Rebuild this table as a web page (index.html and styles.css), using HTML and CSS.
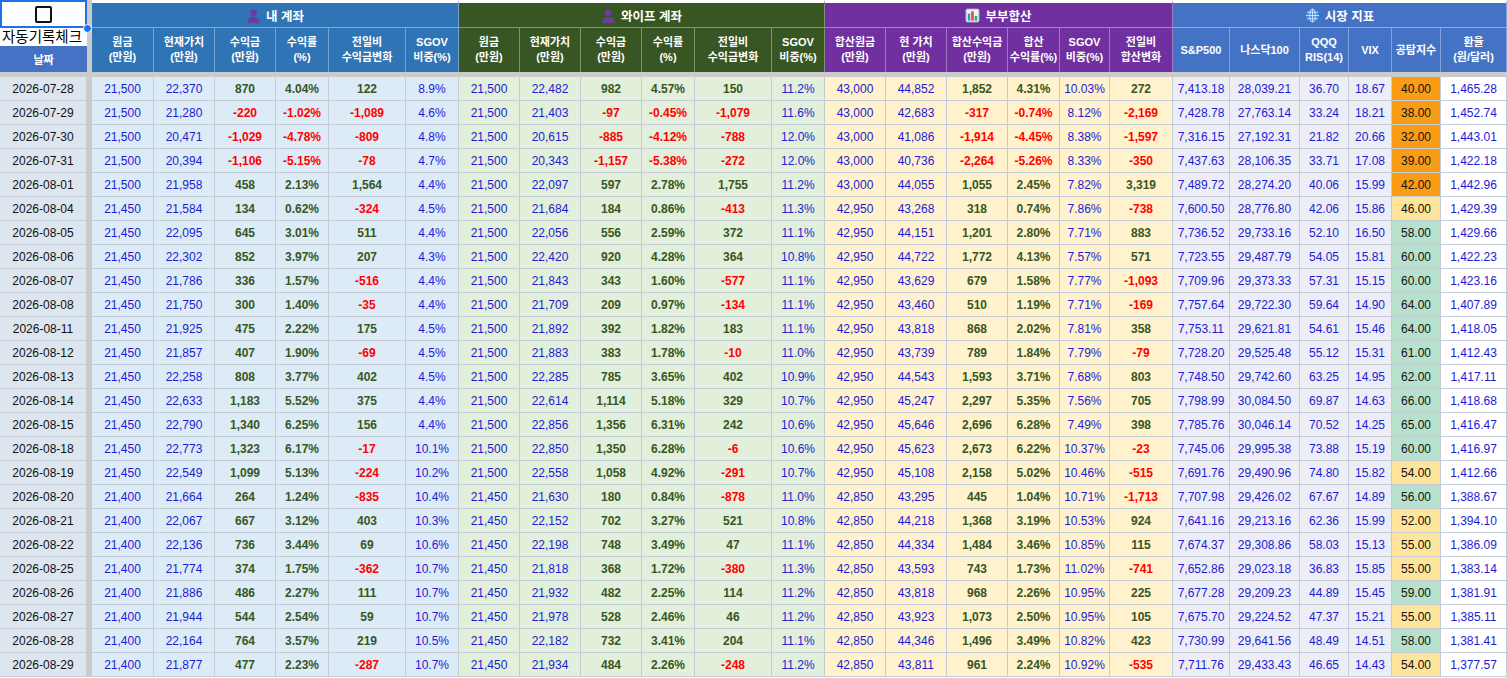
FILE: index.html
```html
<!DOCTYPE html>
<html lang="ko">
<head>
<meta charset="utf-8">
<title>계좌 기록</title>
<link rel="stylesheet" href="styles.css">
</head>
<body>
<div class="sheet">
  <div class="sep-col"></div>
  <div class="sep-row"></div>

  <div class="dtop"><div class="chk"></div><div class="handle"></div></div>
  <div class="g b1"><svg class="ico" width="15" height="15" viewBox="0 0 16 16"><circle cx="8" cy="5" r="3.6" fill="#6b3c9e"/><path d="M1.5 16c0-4.2 2.9-6.6 6.5-6.6s6.5 2.4 6.5 6.6z" fill="#6b3c9e"/></svg><span>내 계좌</span></div>
  <div class="g b2"><svg class="ico" width="15" height="15" viewBox="0 0 16 16"><circle cx="8" cy="5" r="3.6" fill="#6b3c9e"/><path d="M1.5 16c0-4.2 2.9-6.6 6.5-6.6s6.5 2.4 6.5 6.6z" fill="#6b3c9e"/></svg><span>와이프 계좌</span></div>
  <div class="g b3"><svg class="ico" width="15" height="15" viewBox="0 0 16 16"><rect x="1" y="1" width="14" height="14" rx="1.5" fill="#f2f2f2" stroke="#9aa3ab"/><rect x="3" y="6" width="2.6" height="7.5" fill="#3b8fd6"/><rect x="6.7" y="3.5" width="2.6" height="10" fill="#e0443c"/><rect x="10.4" y="8.5" width="2.6" height="5" fill="#35a57a"/></svg><span>부부합산</span></div>
  <div class="g b4"><svg class="ico" width="15" height="15" viewBox="0 0 16 16"><circle cx="8" cy="8" r="7" fill="#3d8de0"/><g fill="none" stroke="#d4e9ff" stroke-width="0.9"><ellipse cx="8" cy="8" rx="3" ry="7"/><line x1="8" y1="1" x2="8" y2="15"/><line x1="1" y1="8" x2="15" y2="8"/><path d="M2.2 4.6h11.6M2.2 11.4h11.6"/></g></svg><span>시장 지표</span></div>

  <div class="dhead"><div class="auto">자동기록체크</div><div class="dlabel">날짜</div></div>
  <div class="h b1">원금<br>(만원)</div>
  <div class="h b1">현재가치<br>(만원)</div>
  <div class="h b1">수익금<br>(만원)</div>
  <div class="h b1">수익률<br>(%)</div>
  <div class="h b1">전일비<br>수익금변화</div>
  <div class="h b1">SGOV<br>비중(%)</div>
  <div class="h b2">원금<br>(만원)</div>
  <div class="h b2">현재가치<br>(만원)</div>
  <div class="h b2">수익금<br>(만원)</div>
  <div class="h b2">수익률<br>(%)</div>
  <div class="h b2">전일비<br>수익금변화</div>
  <div class="h b2">SGOV<br>비중(%)</div>
  <div class="h b3">합산원금<br>(만원)</div>
  <div class="h b3">현 가치<br>(만원)</div>
  <div class="h b3">합산수익금<br>(만원)</div>
  <div class="h b3">합산<br>수익률(%)</div>
  <div class="h b3">SGOV<br>비중(%)</div>
  <div class="h b3">전일비<br>합산변화</div>
  <div class="h b4">S&amp;P500</div>
  <div class="h b4">나스닥100</div>
  <div class="h b4">QQQ<br>RIS(14)</div>
  <div class="h b4">VIX</div>
  <div class="h b4">공탐지수</div>
  <div class="h b4">환율<br>(원/달러)</div>

  <div class="r"><span>2026-07-28</span><span>21,500</span><span>22,370</span><span>870</span><span>4.04%</span><span>122</span><span>8.9%</span><span>21,500</span><span>22,482</span><span>982</span><span>4.57%</span><span>150</span><span>11.2%</span><span>43,000</span><span>44,852</span><span>1,852</span><span>4.31%</span><span>10.03%</span><span>272</span><span>7,413.18</span><span>28,039.21</span><span>36.70</span><span>18.67</span><span class="o">40.00</span><span>1,465.28</span></div>
  <div class="r"><span>2026-07-29</span><span>21,500</span><span>21,280</span><span class="n">-220</span><span class="n">-1.02%</span><span class="n">-1,089</span><span>4.6%</span><span>21,500</span><span>21,403</span><span class="n">-97</span><span class="n">-0.45%</span><span class="n">-1,079</span><span>11.6%</span><span>43,000</span><span>42,683</span><span class="n">-317</span><span class="n">-0.74%</span><span>8.12%</span><span class="n">-2,169</span><span>7,428.78</span><span>27,763.14</span><span>33.24</span><span>18.21</span><span class="o">38.00</span><span>1,452.74</span></div>
  <div class="r"><span>2026-07-30</span><span>21,500</span><span>20,471</span><span class="n">-1,029</span><span class="n">-4.78%</span><span class="n">-809</span><span>4.8%</span><span>21,500</span><span>20,615</span><span class="n">-885</span><span class="n">-4.12%</span><span class="n">-788</span><span>12.0%</span><span>43,000</span><span>41,086</span><span class="n">-1,914</span><span class="n">-4.45%</span><span>8.38%</span><span class="n">-1,597</span><span>7,316.15</span><span>27,192.31</span><span>21.82</span><span>20.66</span><span class="o">32.00</span><span>1,443.01</span></div>
  <div class="r"><span>2026-07-31</span><span>21,500</span><span>20,394</span><span class="n">-1,106</span><span class="n">-5.15%</span><span class="n">-78</span><span>4.7%</span><span>21,500</span><span>20,343</span><span class="n">-1,157</span><span class="n">-5.38%</span><span class="n">-272</span><span>12.0%</span><span>43,000</span><span>40,736</span><span class="n">-2,264</span><span class="n">-5.26%</span><span>8.33%</span><span class="n">-350</span><span>7,437.63</span><span>28,106.35</span><span>33.71</span><span>17.08</span><span class="o">39.00</span><span>1,422.18</span></div>
  <div class="r"><span>2026-08-01</span><span>21,500</span><span>21,958</span><span>458</span><span>2.13%</span><span>1,564</span><span>4.4%</span><span>21,500</span><span>22,097</span><span>597</span><span>2.78%</span><span>1,755</span><span>11.2%</span><span>43,000</span><span>44,055</span><span>1,055</span><span>2.45%</span><span>7.82%</span><span>3,319</span><span>7,489.72</span><span>28,274.20</span><span>40.06</span><span>15.99</span><span class="o">42.00</span><span>1,442.96</span></div>
  <div class="r"><span>2026-08-04</span><span>21,450</span><span>21,584</span><span>134</span><span>0.62%</span><span class="n">-324</span><span>4.5%</span><span>21,500</span><span>21,684</span><span>184</span><span>0.86%</span><span class="n">-413</span><span>11.3%</span><span>42,950</span><span>43,268</span><span>318</span><span>0.74%</span><span>7.86%</span><span class="n">-738</span><span>7,600.50</span><span>28,776.80</span><span>42.06</span><span>15.86</span><span class="y">46.00</span><span>1,429.39</span></div>
  <div class="r"><span>2026-08-05</span><span>21,450</span><span>22,095</span><span>645</span><span>3.01%</span><span>511</span><span>4.4%</span><span>21,500</span><span>22,056</span><span>556</span><span>2.59%</span><span>372</span><span>11.1%</span><span>42,950</span><span>44,151</span><span>1,201</span><span>2.80%</span><span>7.71%</span><span>883</span><span>7,736.52</span><span>29,733.16</span><span>52.10</span><span>16.50</span><span class="gr">58.00</span><span>1,429.66</span></div>
  <div class="r"><span>2026-08-06</span><span>21,450</span><span>22,302</span><span>852</span><span>3.97%</span><span>207</span><span>4.3%</span><span>21,500</span><span>22,420</span><span>920</span><span>4.28%</span><span>364</span><span>10.8%</span><span>42,950</span><span>44,722</span><span>1,772</span><span>4.13%</span><span>7.57%</span><span>571</span><span>7,723.55</span><span>29,487.79</span><span>54.05</span><span>15.81</span><span class="gr">60.00</span><span>1,422.23</span></div>
  <div class="r"><span>2026-08-07</span><span>21,450</span><span>21,786</span><span>336</span><span>1.57%</span><span class="n">-516</span><span>4.4%</span><span>21,500</span><span>21,843</span><span>343</span><span>1.60%</span><span class="n">-577</span><span>11.1%</span><span>42,950</span><span>43,629</span><span>679</span><span>1.58%</span><span>7.77%</span><span class="n">-1,093</span><span>7,709.96</span><span>29,373.33</span><span>57.31</span><span>15.15</span><span class="gr">60.00</span><span>1,423.16</span></div>
  <div class="r"><span>2026-08-08</span><span>21,450</span><span>21,750</span><span>300</span><span>1.40%</span><span class="n">-35</span><span>4.4%</span><span>21,500</span><span>21,709</span><span>209</span><span>0.97%</span><span class="n">-134</span><span>11.1%</span><span>42,950</span><span>43,460</span><span>510</span><span>1.19%</span><span>7.71%</span><span class="n">-169</span><span>7,757.64</span><span>29,722.30</span><span>59.64</span><span>14.90</span><span class="gr">64.00</span><span>1,407.89</span></div>
  <div class="r"><span>2026-08-11</span><span>21,450</span><span>21,925</span><span>475</span><span>2.22%</span><span>175</span><span>4.5%</span><span>21,500</span><span>21,892</span><span>392</span><span>1.82%</span><span>183</span><span>11.1%</span><span>42,950</span><span>43,818</span><span>868</span><span>2.02%</span><span>7.81%</span><span>358</span><span>7,753.11</span><span>29,621.81</span><span>54.61</span><span>15.46</span><span class="gr">64.00</span><span>1,418.05</span></div>
  <div class="r"><span>2026-08-12</span><span>21,450</span><span>21,857</span><span>407</span><span>1.90%</span><span class="n">-69</span><span>4.5%</span><span>21,500</span><span>21,883</span><span>383</span><span>1.78%</span><span class="n">-10</span><span>11.0%</span><span>42,950</span><span>43,739</span><span>789</span><span>1.84%</span><span>7.79%</span><span class="n">-79</span><span>7,728.20</span><span>29,525.48</span><span>55.12</span><span>15.31</span><span class="gr">61.00</span><span>1,412.43</span></div>
  <div class="r"><span>2026-08-13</span><span>21,450</span><span>22,258</span><span>808</span><span>3.77%</span><span>402</span><span>4.5%</span><span>21,500</span><span>22,285</span><span>785</span><span>3.65%</span><span>402</span><span>10.9%</span><span>42,950</span><span>44,543</span><span>1,593</span><span>3.71%</span><span>7.68%</span><span>803</span><span>7,748.50</span><span>29,742.60</span><span>63.25</span><span>14.95</span><span class="gr">62.00</span><span>1,417.11</span></div>
  <div class="r"><span>2026-08-14</span><span>21,450</span><span>22,633</span><span>1,183</span><span>5.52%</span><span>375</span><span>4.4%</span><span>21,500</span><span>22,614</span><span>1,114</span><span>5.18%</span><span>329</span><span>10.7%</span><span>42,950</span><span>45,247</span><span>2,297</span><span>5.35%</span><span>7.56%</span><span>705</span><span>7,798.99</span><span>30,084.50</span><span>69.87</span><span>14.63</span><span class="gr">66.00</span><span>1,418.68</span></div>
  <div class="r"><span>2026-08-15</span><span>21,450</span><span>22,790</span><span>1,340</span><span>6.25%</span><span>156</span><span>4.4%</span><span>21,500</span><span>22,856</span><span>1,356</span><span>6.31%</span><span>242</span><span>10.6%</span><span>42,950</span><span>45,646</span><span>2,696</span><span>6.28%</span><span>7.49%</span><span>398</span><span>7,785.76</span><span>30,046.14</span><span>70.52</span><span>14.25</span><span class="gr">65.00</span><span>1,416.47</span></div>
  <div class="r"><span>2026-08-18</span><span>21,450</span><span>22,773</span><span>1,323</span><span>6.17%</span><span class="n">-17</span><span>10.1%</span><span>21,500</span><span>22,850</span><span>1,350</span><span>6.28%</span><span class="n">-6</span><span>10.6%</span><span>42,950</span><span>45,623</span><span>2,673</span><span>6.22%</span><span>10.37%</span><span class="n">-23</span><span>7,745.06</span><span>29,995.38</span><span>73.88</span><span>15.19</span><span class="gr">60.00</span><span>1,416.97</span></div>
  <div class="r"><span>2026-08-19</span><span>21,450</span><span>22,549</span><span>1,099</span><span>5.13%</span><span class="n">-224</span><span>10.2%</span><span>21,500</span><span>22,558</span><span>1,058</span><span>4.92%</span><span class="n">-291</span><span>10.7%</span><span>42,950</span><span>45,108</span><span>2,158</span><span>5.02%</span><span>10.46%</span><span class="n">-515</span><span>7,691.76</span><span>29,490.96</span><span>74.80</span><span>15.82</span><span class="y">54.00</span><span>1,412.66</span></div>
  <div class="r"><span>2026-08-20</span><span>21,400</span><span>21,664</span><span>264</span><span>1.24%</span><span class="n">-835</span><span>10.4%</span><span>21,450</span><span>21,630</span><span>180</span><span>0.84%</span><span class="n">-878</span><span>11.0%</span><span>42,850</span><span>43,295</span><span>445</span><span>1.04%</span><span>10.71%</span><span class="n">-1,713</span><span>7,707.98</span><span>29,426.02</span><span>67.67</span><span>14.89</span><span class="gr">56.00</span><span>1,388.67</span></div>
  <div class="r"><span>2026-08-21</span><span>21,400</span><span>22,067</span><span>667</span><span>3.12%</span><span>403</span><span>10.3%</span><span>21,450</span><span>22,152</span><span>702</span><span>3.27%</span><span>521</span><span>10.8%</span><span>42,850</span><span>44,218</span><span>1,368</span><span>3.19%</span><span>10.53%</span><span>924</span><span>7,641.16</span><span>29,213.16</span><span>62.36</span><span>15.99</span><span class="y">52.00</span><span>1,394.10</span></div>
  <div class="r"><span>2026-08-22</span><span>21,400</span><span>22,136</span><span>736</span><span>3.44%</span><span>69</span><span>10.6%</span><span>21,450</span><span>22,198</span><span>748</span><span>3.49%</span><span>47</span><span>11.1%</span><span>42,850</span><span>44,334</span><span>1,484</span><span>3.46%</span><span>10.85%</span><span>115</span><span>7,674.37</span><span>29,308.86</span><span>58.03</span><span>15.13</span><span class="y">55.00</span><span>1,386.09</span></div>
  <div class="r"><span>2026-08-25</span><span>21,400</span><span>21,774</span><span>374</span><span>1.75%</span><span class="n">-362</span><span>10.7%</span><span>21,450</span><span>21,818</span><span>368</span><span>1.72%</span><span class="n">-380</span><span>11.3%</span><span>42,850</span><span>43,593</span><span>743</span><span>1.73%</span><span>11.02%</span><span class="n">-741</span><span>7,652.86</span><span>29,023.18</span><span>36.83</span><span>15.85</span><span class="y">55.00</span><span>1,383.14</span></div>
  <div class="r"><span>2026-08-26</span><span>21,400</span><span>21,886</span><span>486</span><span>2.27%</span><span>111</span><span>10.7%</span><span>21,450</span><span>21,932</span><span>482</span><span>2.25%</span><span>114</span><span>11.2%</span><span>42,850</span><span>43,818</span><span>968</span><span>2.26%</span><span>10.95%</span><span>225</span><span>7,677.28</span><span>29,209.23</span><span>44.89</span><span>15.45</span><span class="gr">59.00</span><span>1,381.91</span></div>
  <div class="r"><span>2026-08-27</span><span>21,400</span><span>21,944</span><span>544</span><span>2.54%</span><span>59</span><span>10.7%</span><span>21,450</span><span>21,978</span><span>528</span><span>2.46%</span><span>46</span><span>11.2%</span><span>42,850</span><span>43,923</span><span>1,073</span><span>2.50%</span><span>10.95%</span><span>105</span><span>7,675.70</span><span>29,224.52</span><span>47.37</span><span>15.21</span><span class="y">55.00</span><span>1,385.11</span></div>
  <div class="r"><span>2026-08-28</span><span>21,400</span><span>22,164</span><span>764</span><span>3.57%</span><span>219</span><span>10.5%</span><span>21,450</span><span>22,182</span><span>732</span><span>3.41%</span><span>204</span><span>11.1%</span><span>42,850</span><span>44,346</span><span>1,496</span><span>3.49%</span><span>10.82%</span><span>423</span><span>7,730.99</span><span>29,641.56</span><span>48.49</span><span>14.51</span><span class="gr">58.00</span><span>1,381.41</span></div>
  <div class="r"><span>2026-08-29</span><span>21,400</span><span>21,877</span><span>477</span><span>2.23%</span><span class="n">-287</span><span>10.7%</span><span>21,450</span><span>21,934</span><span>484</span><span>2.26%</span><span class="n">-248</span><span>11.2%</span><span>42,850</span><span>43,811</span><span>961</span><span>2.24%</span><span>10.92%</span><span class="n">-535</span><span>7,711.76</span><span>29,433.43</span><span>46.65</span><span>14.43</span><span class="y">54.00</span><span>1,377.57</span></div>
</div>
</body>
</html>
```

FILE: styles.css
```css
* { box-sizing: border-box; }
html, body { margin: 0; padding: 0; background: #fff; }
body {
  font-family: "Liberation Sans", "Noto Sans CJK KR", Arial, sans-serif;
  font-size: 12px;
  color: #000;
  overflow: hidden;
}

.sheet {
  display: grid;
  width: 1507px;
  grid-template-columns:
    87px 5px
    62px 61px 61px 53px 77px 53px
    61px 61px 61px 53px 77px 53px
    61px 61px 61px 52px 50px 63px
    57px 70px 49px 43px 49px 66px;
  grid-template-rows: 28px 44px 5px repeat(25, 24px);
}

.sep-col { grid-column: 2; grid-row: 1 / -1; background: #cbcbcb; }
.sep-row { grid-column: 1 / -1; grid-row: 3; background: #cbcbcb; }

/* date column top */
.dtop {
  position: relative;
  background: #fff;
  border: 2px solid #1a73e8;
  display: flex;
  align-items: center;
  justify-content: center;
}
.chk {
  width: 17px;
  height: 17px;
  border: 2px solid #111;
  border-radius: 2px;
}
.handle {
  position: absolute;
  right: -7px;
  bottom: -7px;
  width: 9px;
  height: 9px;
  border-radius: 50%;
  background: #1a73e8;
  border: 1px solid #fff;
  z-index: 2;
}
.dhead { display: flex; flex-direction: column; }
.auto {
  height: 18px;
  line-height: 18px;
  background: #fff;
  padding-left: 2px;
  font-size: 14.5px;
  white-space: nowrap;
  color: #000;
}
.dlabel {
  flex: 1;
  background: #4472c4;
  color: #fff;
  font-weight: bold;
  font-size: 11px;
  display: flex;
  align-items: center;
  justify-content: center;
}

/* header colours */
.b1 { background: #2f74b5; }
.b2 { background: #375623; }
.b3 { background: #7030a0; }
.b4 { background: #4472c4; }

.g {
  grid-column: span 6;
  display: flex;
  align-items: center;
  justify-content: center;
  gap: 5px;
  color: #fff;
  font-weight: bold;
  font-size: 12.5px;
  border-top: 3px solid #fff;
  border-right: 1px solid rgba(255, 255, 255, 0.35);
  border-bottom: 1px solid rgba(255, 255, 255, 0.4);
}
.ico { display: block; flex: none; }

.h {
  display: flex;
  align-items: center;
  justify-content: center;
  text-align: center;
  color: #fff;
  font-weight: bold;
  font-size: 11px;
  line-height: 15px;
  border-right: 1px solid rgba(255, 255, 255, 0.35);
  white-space: nowrap;
}

/* data rows */
.r { display: contents; }
.r > span {
  display: flex;
  align-items: center;
  justify-content: center;
  white-space: nowrap;
  border-right: 1px solid #c3ccd6;
  border-bottom: 1px solid #c3ccd6;
  color: #1c1cd2;
}
.r > span:nth-child(1) { background: #dde5ee; color: #111; }
.r > span:nth-child(n+2):nth-child(-n+7) { background: #ddebf7; }
.r > span:nth-child(n+8):nth-child(-n+13) { background: #e2efda; }
.r > span:nth-child(n+14):nth-child(-n+19) { background: #fff2cc; }
.r > span:nth-child(n+20):nth-child(-n+23) { background: #ededf5; }
.r > span:nth-child(24) { color: #111; }
.r > span:nth-child(25) { background: #fff; }

.r > span:nth-child(4),
.r > span:nth-child(5),
.r > span:nth-child(6),
.r > span:nth-child(10),
.r > span:nth-child(11),
.r > span:nth-child(12),
.r > span:nth-child(16),
.r > span:nth-child(17),
.r > span:nth-child(19) {
  color: #375623;
  font-weight: bold;
}

.r > span.n { color: #ff0000; }
.r > span.o { background: #f99c16; }
.r > span.y { background: #ffe59b; }
.r > span.gr { background: #b7e1cd; }
```
